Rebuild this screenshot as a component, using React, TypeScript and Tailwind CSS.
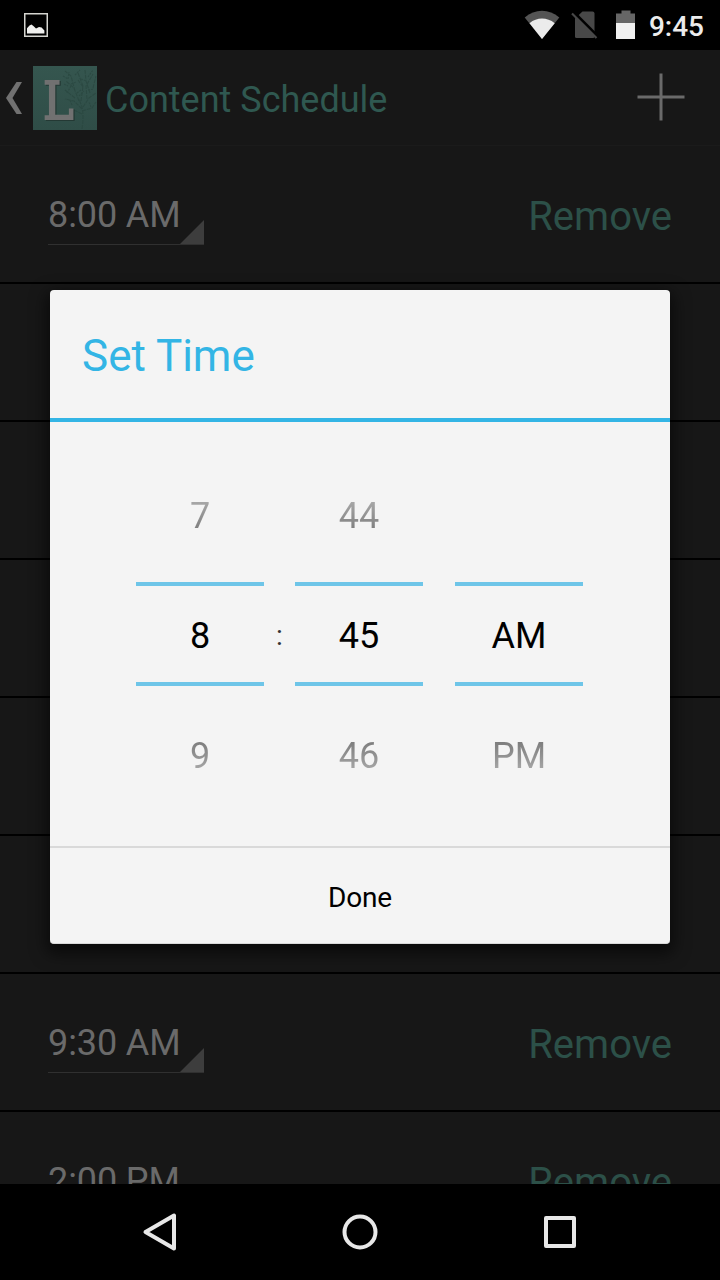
import type { ReactNode } from "react";

const rows = [
  { time: "8:00 AM" },
  { time: "" },
  { time: "" },
  { time: "" },
  { time: "" },
  { time: "" },
  { time: "9:30 AM" },
  { time: "2:00 PM" },
];

function StatusBar() {
  return (
    <div className="flex h-[50px] shrink-0 items-center justify-between bg-black pr-4 pl-6">
      <svg width="24" height="24" viewBox="0 0 24 24">
        <rect x="0.75" y="0.75" width="22.5" height="22.5" fill="none" stroke="#d5d5d0" strokeWidth="1.5" />
        <path d="M3 20.5v-5.3l2.5-2.6 2-1 2.2 1.6 2.3 2.3 3-1.4 2.6.4 2.8 3v3z" fill="#f0f0ee" />
      </svg>
      <div className="flex h-full items-center">
        <svg width="36" height="30" viewBox="0 0 36 30">
          <path d="M0.7 7.5C11 -1.5 25 -1.5 35.3 7.5L18 29Z" fill="#545454" />
          <path d="M5.5 13.2C13 7 23 7 30.7 13.2L18 29Z" fill="#ebebeb" />
        </svg>
        <svg className="ml-[11px]" width="28" height="28" viewBox="0 0 28 28">
          <path d="M11.5 0.5H21.500a2 2 0 0 1 2 2v23a1.5 1.5 0 0 1-1.500 1.500H5.500a1.500 1.500 0 0 1-1.500-1.500V7.500Z" fill="#484848" />
          <path d="M2 0.500L27.500 26" stroke="#000" strokeWidth="3" />
          <path d="M1 2.500L25.500 27" stroke="#484848" strokeWidth="2.200" />
        </svg>
        <svg className="ml-[17px]" width="20" height="30" viewBox="0 0 20 30">
          <path d="M5.500 0.500h9v3H19v10H0v-10h5.500z" fill="#666" />
          <path d="M0 13h19v16H0z" fill="#f0f0f0" />
        </svg>
        <span className="mt-[4px] ml-[13px] text-[28px] leading-none font-medium text-[#ececec]">9:45</span>
      </div>
    </div>
  );
}

function AppLogo() {
  return (
    <svg className="ml-[10px]" width="64" height="64" viewBox="0 0 64 64">
      <defs>
        <linearGradient id="logoFill" x1="0" y1="0" x2="0" y2="1">
          <stop offset="0" stopColor="#35564f" />
          <stop offset="1" stopColor="#2f4d47" />
        </linearGradient>
      </defs>
      <rect width="64" height="64" fill="url(#logoFill)" />
      <g fill="none" stroke="#29463f" strokeWidth="1.100" opacity="0.700">
        <path d="M49 63q2-12 0-22l-3-8M49 43l-8-8-9-2M50 41l6-9 7-5M46 35l-5-13-8-7M48 35l2-15-5-13M54 33l-1-13 7-12M42 32l-10-8M42 25l-4-15-6-5M50 21l-5-7M57 27l-4-12-1-11M60 22l3-12M49 45l10-3 4-6M49 48l-10-5" strokeDasharray="4 1" />
        <path d="M30 10l5 3 1-7M38 18l5-2M34 27l4-7M42 9l5-5M55 11l5-7M55 24l6-1M44 27l4-3M39 39l-2-5M58 41l-2-5M31 18l4 2M48 13l5 2M46 30l5-5" strokeDasharray="2 1" />
      </g>
      <g transform="translate(10 52.500) scale(0.870 1)" fontFamily="DejaVu Serif, serif" fontSize="53" strokeWidth="2">
        <text x="1.500" y="1" fill="#243934" stroke="#243934">L</text>
        <text x="0" y="0" fill="#717171" stroke="#717171">L</text>
      </g>
    </svg>
  );
}

function Header() {
  return (
    <div className="flex h-24 shrink-0 items-center border-b border-[#1b1b1b] pr-[35px] pl-[5px]">
      <svg width="18" height="34" viewBox="0 0 18 34">
        <path d="M11.500 1H17L7.500 17l9.500 16h-5.500L1 17Z" fill="#717171" />
      </svg>
      <AppLogo />
      <span className="mt-[4px] ml-2 text-[36px] leading-[40px] text-[#2f5850]">Content Schedule</span>
      <svg className="mb-px ml-auto" width="48" height="48" viewBox="0 0 48 48">
        <path d="M24 0.500V47.500M0.500 24H47.500" stroke="#6a6a6a" strokeWidth="3" />
      </svg>
    </div>
  );
}

function ScheduleRow({ time }: { time: string }) {
  return (
    <div className="flex h-[138px] shrink-0 items-start justify-between border-b-2 border-black px-12">
      {time && (
        <>
          <div className="mt-[49px] flex h-[50px] w-[156px] items-end justify-between border-b border-[#303030]">
            <span className="h-full text-[36px] leading-[40px] tracking-[-0.1px] whitespace-nowrap text-[#6a6a6a]">
              {time}
            </span>
            <svg className="-ml-2 shrink-0" width="24" height="24" viewBox="0 0 24 24">
              <path d="M24 0V24H0Z" fill="#3d3d3d" />
            </svg>
          </div>
          <span className="mt-[47px] text-[40px] leading-[48px] text-[#2c5048]">Remove</span>
        </>
      )}
    </div>
  );
}

function Column({ prev, current, next }: { prev: string; current: string; next: string }) {
  return (
    <div className="flex w-32 flex-col items-center text-[36px] leading-[40px]">
      <div className="flex h-[110px] items-center">
        <span className="mb-[18px] bg-linear-to-b from-[#b0b0b0] to-[#757575] bg-clip-text text-transparent">{prev}</span>
      </div>
      <div className="mt-[2px] flex h-[104px] w-full items-center justify-center border-y-4 border-[#6ec5e8] pt-[4px] text-black">
        {current}
      </div>
      <div className="flex h-[112px] items-center">
        <span className="mt-[28px] bg-linear-to-b from-[#757575] to-[#b0b0b0] bg-clip-text text-transparent">{next}</span>
      </div>
    </div>
  );
}

function TimeDialog() {
  return (
    <div className="flex h-[654px] w-[620px] flex-col overflow-hidden rounded-[4px] border-b border-[#d9d9d9] bg-[#f4f4f4] shadow-[0_6px_16px_4px_rgba(0,0,0,0.550)]">
      <div className="flex h-[132px] shrink-0 items-center border-b-4 border-[#33b5e5] px-8 text-[44px] text-[#33b5e5]">
        <span className="mt-[4px]">Set Time</span>
      </div>
      <div className="flex h-[424px] shrink-0 pt-[48px] pl-[86px]">
        <Column prev="7" current="8" next="9" />
        <div className="flex h-[332px] w-[31px] items-center justify-center text-[28px] text-[#333]">
          <span>:</span>
        </div>
        <Column prev="44" current="45" next="46" />
        <div className="w-8" />
        <Column prev="" current="AM" next="PM" />
      </div>
      <button className="flex h-[97px] shrink-0 items-center justify-center border-t-2 border-[#d9d9d9] pt-[4px] text-[28px] tracking-[-0.2px] text-black">
        Done
      </button>
    </div>
  );
}

function NavButton({ children }: { children: ReactNode }) {
  return (
    <svg width="40" height="40" viewBox="0 0 40 40" fill="none" stroke="#e8e8e8" strokeWidth="4" strokeLinejoin="round">
      {children}
    </svg>
  );
}

function NavBar() {
  return (
    <div className="flex h-24 shrink-0 items-center justify-center gap-40 bg-black">
      <NavButton>
        <path d="M34 3.500V36.500L5.500 20Z" />
      </NavButton>
      <NavButton>
        <circle cx="20" cy="20" r="15.500" />
      </NavButton>
      <NavButton>
        <rect x="6" y="6" width="28" height="28" />
      </NavButton>
    </div>
  );
}

export default function App() {
  return (
    <div className="relative flex h-[1280px] w-[720px] flex-col overflow-hidden bg-[#171717] font-['Roboto',sans-serif]">
      <StatusBar />
      <Header />
      <div className="flex min-h-0 flex-1 flex-col overflow-hidden">
        {rows.map((row, i) => (
          <ScheduleRow key={i} time={row.time} />
        ))}
      </div>
      <NavBar />
      <div className="absolute top-[290px] left-[50px]">
        <TimeDialog />
      </div>
    </div>
  );
}
